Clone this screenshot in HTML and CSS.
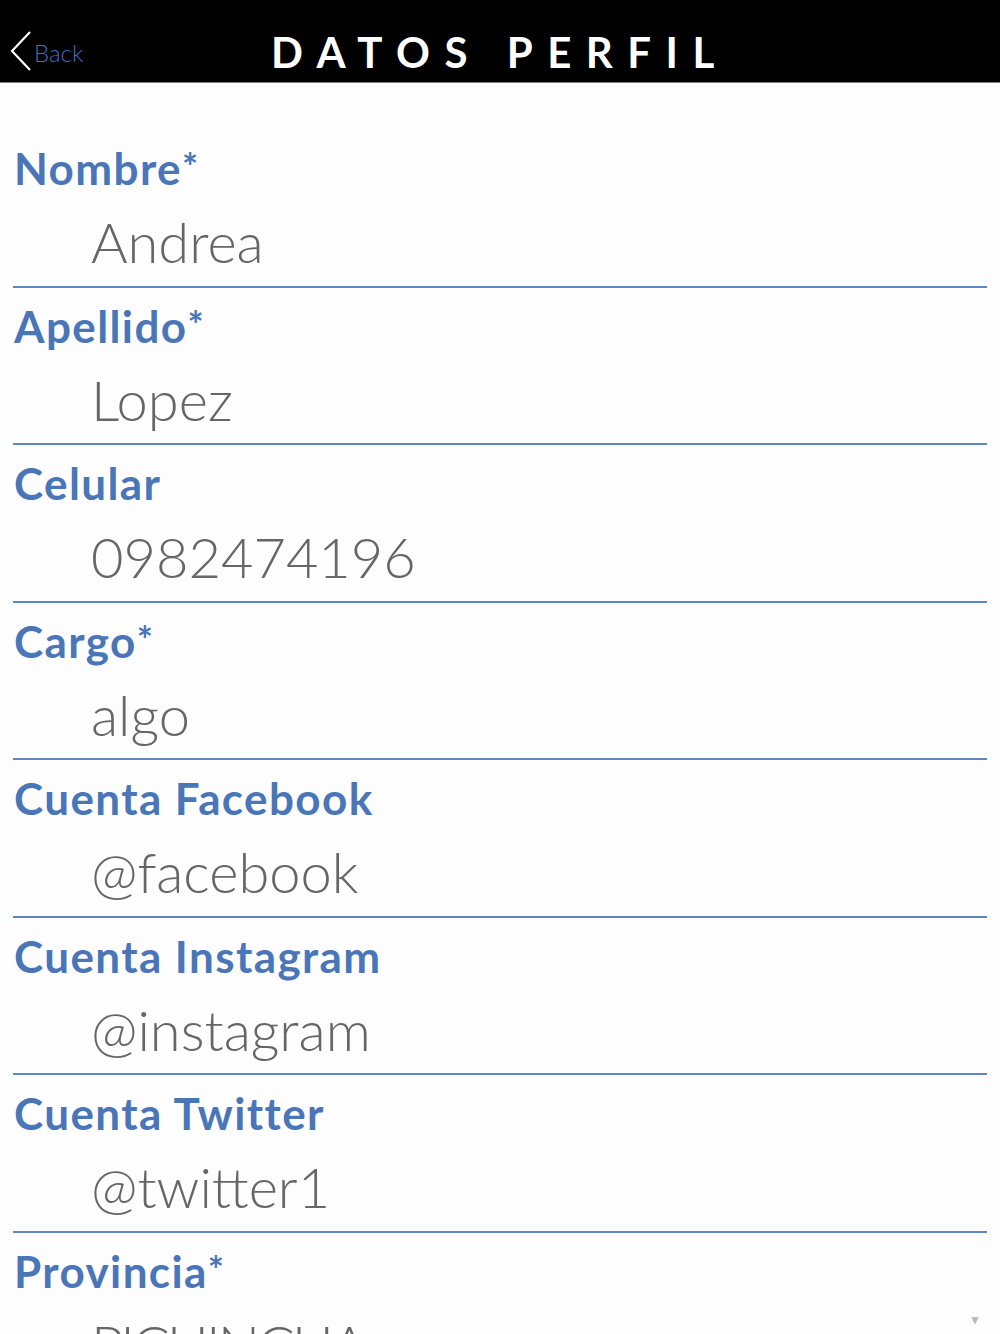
FILE: index.html
```html
<!DOCTYPE html>
<html>
<head>
   <meta charset="UTF-8">
   <title>Datos Perfil</title>
   <link rel="stylesheet" href="styles.css">
</head>
<body>
<header class="topbar">
   <a class="back" href="#">
      <svg class="back-icon" width="24" height="44" viewBox="0 0 24 44">
         <polyline points="21,2 3,21 21,40" fill="none" stroke="#fff" stroke-width="2.2"/>
      </svg>
      <span class="back-text">Back</span>
   </a>
   <h1 class="title">DATOS PERFIL</h1>
   <div></div>
</header>

<main class="form">
   <div class="field">
      <div class="label">Nombre<span class="req">*</span></div>
      <div class="value">Andrea</div>
   </div>
   <div class="field">
      <div class="label">Apellido<span class="req">*</span></div>
      <div class="value">Lopez</div>
   </div>
   <div class="field">
      <div class="label">Celular</div>
      <div class="value">0982474196</div>
   </div>
   <div class="field">
      <div class="label">Cargo<span class="req">*</span></div>
      <div class="value">algo</div>
   </div>
   <div class="field">
      <div class="label">Cuenta Facebook</div>
      <div class="value">@facebook</div>
   </div>
   <div class="field">
      <div class="label">Cuenta Instagram</div>
      <div class="value">@instagram</div>
   </div>
   <div class="field">
      <div class="label">Cuenta Twitter</div>
      <div class="value">@twitter1</div>
   </div>
   <div class="field select">
      <div class="label">Provincia<span class="req">*</span></div>
      <div class="value"><span class="option">PICHINCHA</span><span class="caret">&#9660;</span></div>
   </div>
</main>
</body>
</html>
```

FILE: styles.css
```css
html, body {
   margin: 0;
   padding: 0;
}

body {
   background-color: #fdfdfd;
   font-family: "Lato", "Liberation Sans", sans-serif;
   overflow: hidden;
}

.topbar {
   display: grid;
   grid-template-columns: 1fr auto 1fr;
   align-items: center;
   height: 83px;
   padding-top: 22px;
   box-sizing: border-box;
   background-color: #000;
   border-bottom: 1px solid #7d7d7d;
}

.back {
   display: flex;
   align-items: center;
   padding-left: 9px;
   text-decoration: none;
}

.back-icon {
   margin-top: -20px;
   margin-bottom: -20px;
}

.back-text {
   color: #3d6fc6;
   font-size: 24px;
   font-weight: 300;
   margin-left: 1px;
}

.title {
   margin: 0;
   color: #fff;
   font-size: 42px;
   font-weight: 700;
   letter-spacing: 14.5px;
   line-height: 50px;
}

.form {
   margin-top: 47px;
   padding: 0 13px;
}

.field {
   height: 155.5px;
   box-sizing: content-box;
   padding: 0;
   border-bottom: 2px solid #5f86be;
}

.label {
   padding-top: 13px;
   padding-left: 1px;
   color: #4a76b8;
   font-size: 44px;
   font-weight: 700;
   letter-spacing: 1.4px;
   line-height: 50px;
}

.req {
   font-size: 38px;
   line-height: 1;
   letter-spacing: 0;
   vertical-align: 4px;
}

.value {
   position: relative;
   margin-top: 14px;
   padding-left: 78px;
   color: #666;
   font-size: 56px;
   font-weight: 300;
   line-height: 70px;
}

.select .option {
   text-transform: uppercase;
   letter-spacing: -3px;
}

.caret {
   position: absolute;
   right: 6px;
   top: 4px;
   color: #b5b5b5;
   font-size: 12px;
   line-height: 12px;
}
```
